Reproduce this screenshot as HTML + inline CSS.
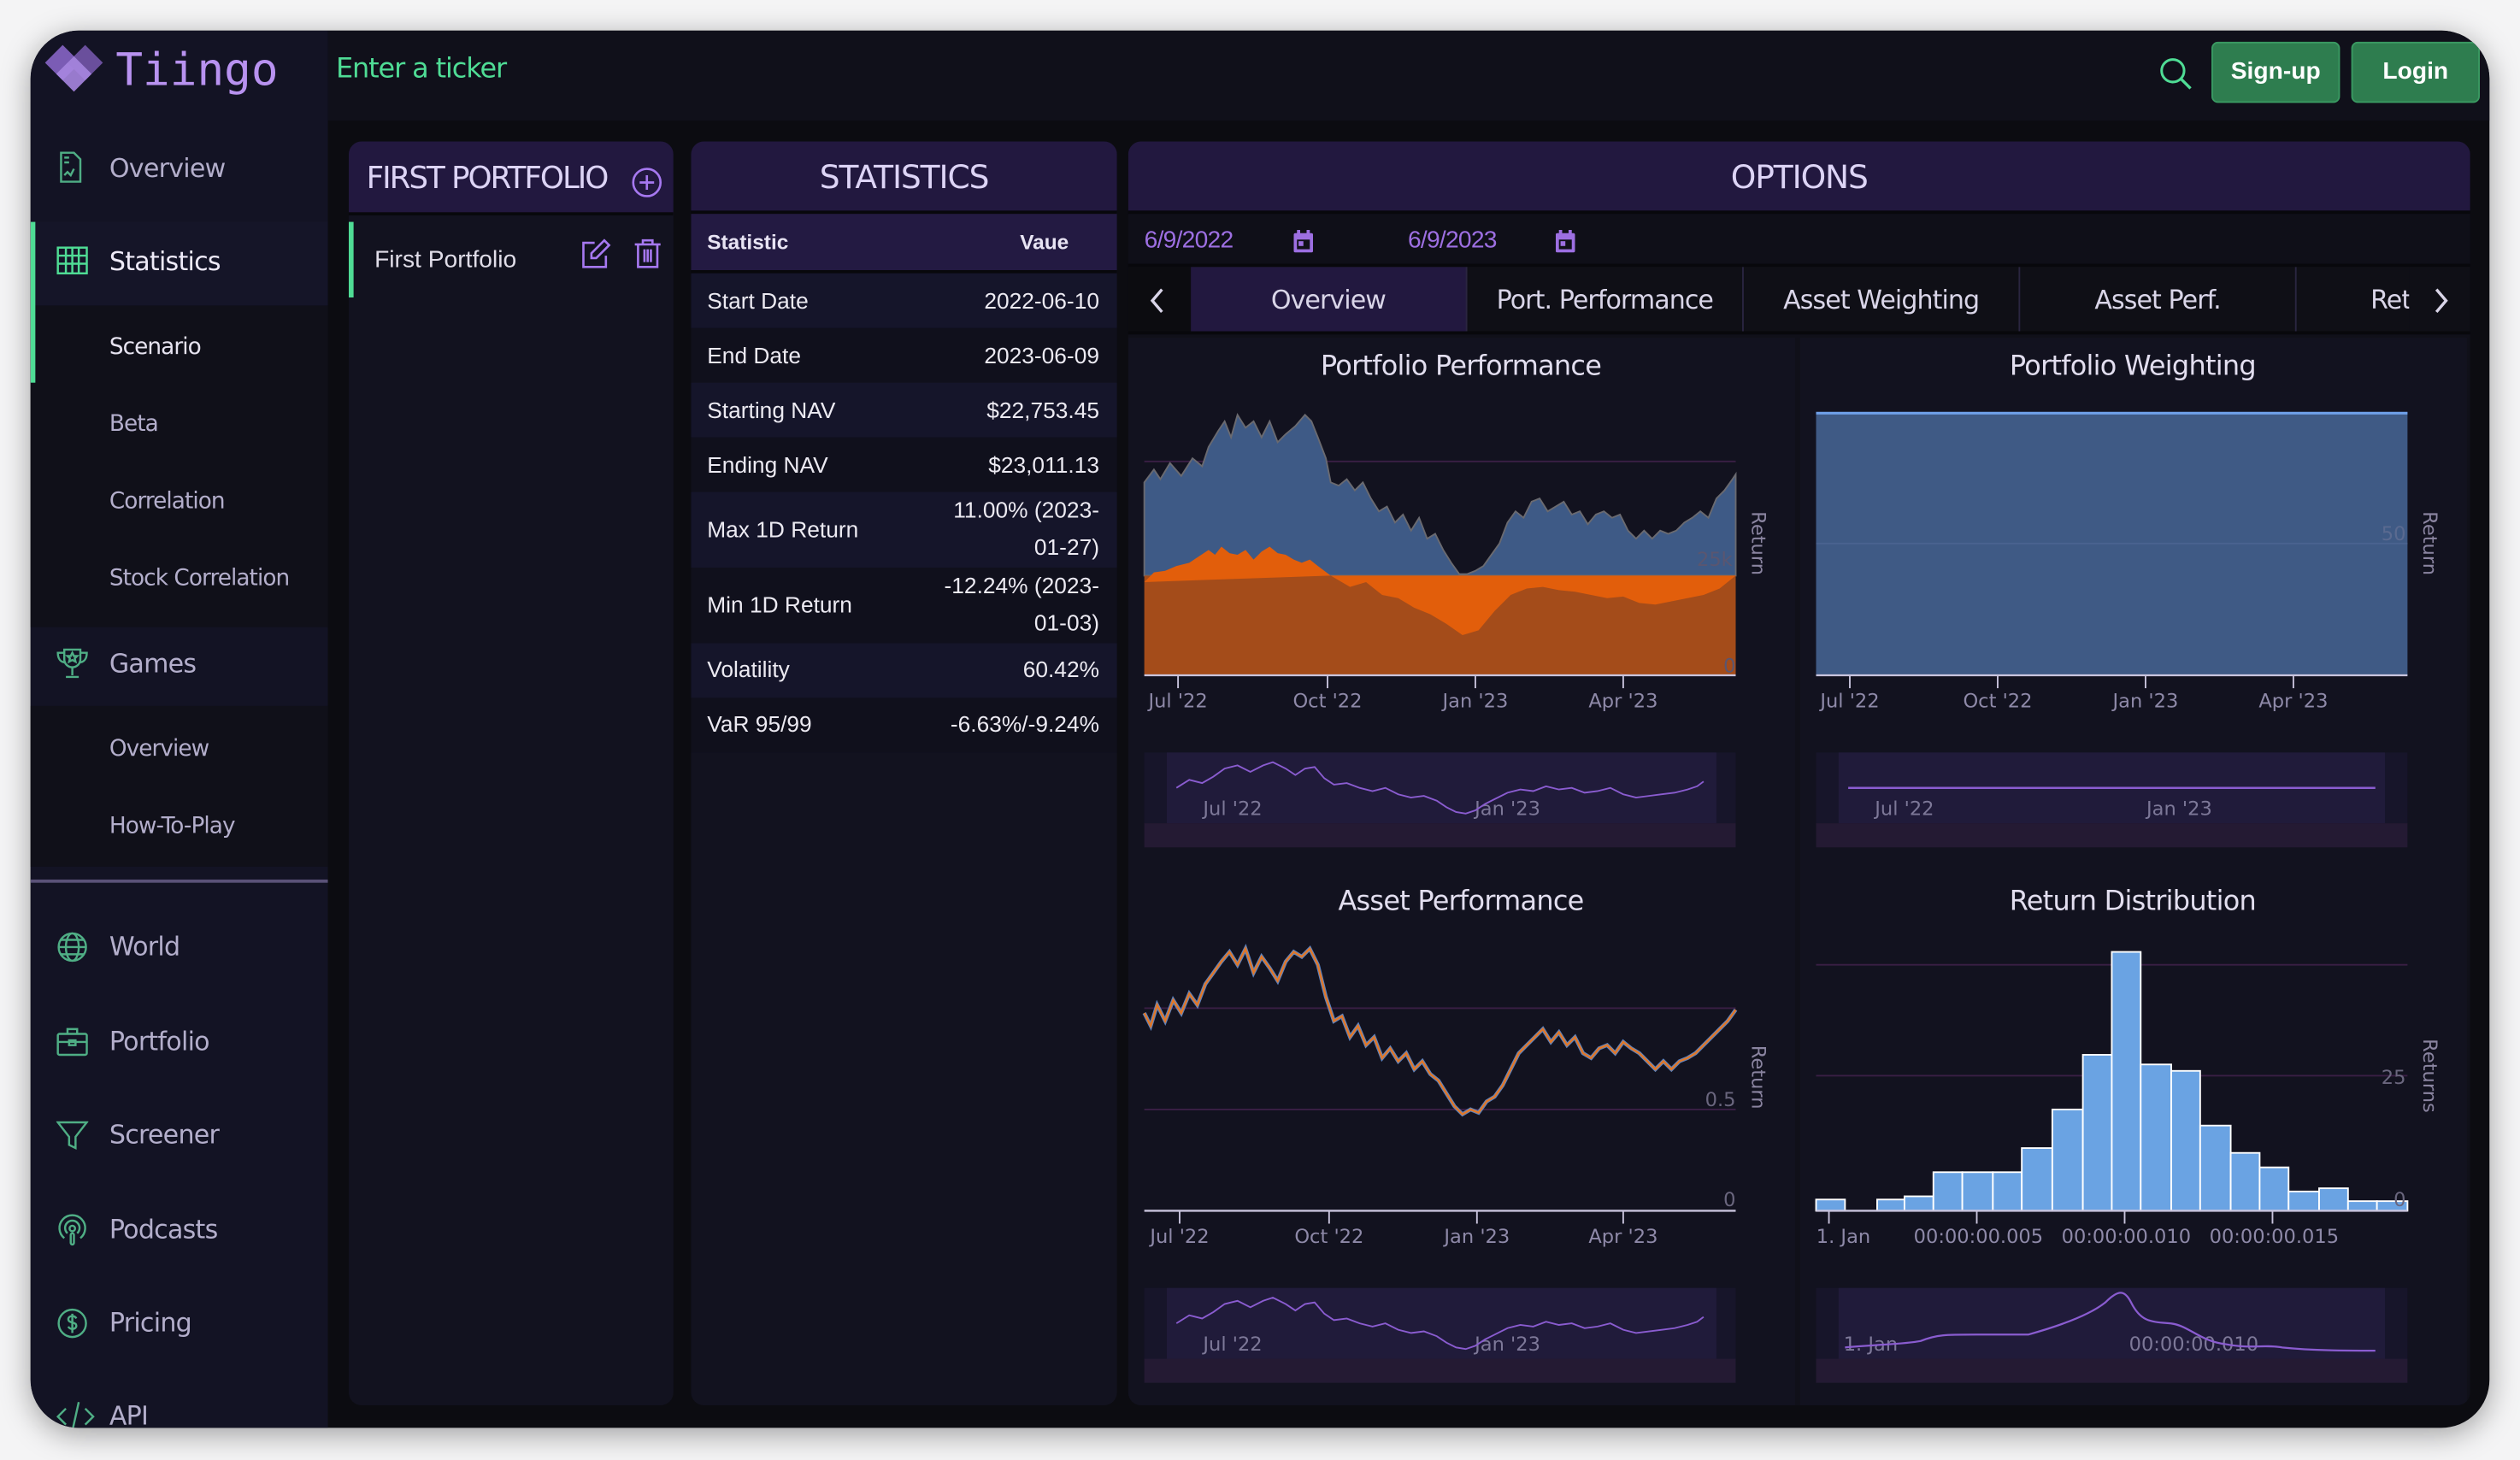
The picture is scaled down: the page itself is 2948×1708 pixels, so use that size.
<!DOCTYPE html>
<html><head><meta charset="utf-8">
<style>
*{margin:0;padding:0;box-sizing:border-box}
html,body{width:2948px;height:1708px;overflow:hidden;background:#f4f4f5}
.s{position:absolute;left:0;top:0;width:1568px;height:908px;transform:scale(1.88010,1.88106);transform-origin:0 0;font-family:"Liberation Sans",sans-serif}
.frame{position:absolute;left:19px;top:19px;width:1530px;height:869px;border-radius:30px;overflow:hidden;background:#0c0c11;box-shadow:0 4px 18px rgba(0,0,0,.35)}
.a{position:absolute}
.side{left:0;top:0;width:185px;height:869px;background:#131324}
.nav{position:absolute;left:49px;color:#b3aecb;font-size:16px;font-family:"DejaVu Sans","Liberation Sans",sans-serif;letter-spacing:-.4px}
.sub{position:absolute;left:49px;color:#b3aecb;font-size:14px;font-family:"DejaVu Sans","Liberation Sans",sans-serif;letter-spacing:-.5px}
.ic{position:absolute;left:16px}
.panel{position:absolute;background:#12121f;border-radius:8px;overflow:hidden}
.ph{position:absolute;left:0;top:0;width:100%;background:#22183f;color:#ddd4f6;font-size:20px;font-family:"DejaVu Sans","Liberation Sans",sans-serif}
.row{position:absolute;left:0;width:265px;font-size:14px;color:#eceaf2}
.row .l{position:absolute;left:10px}
.row .r{position:absolute;right:11px;text-align:right;line-height:23px}
.tab{position:absolute;top:0;height:42px;line-height:42px;text-align:center;color:#d9d5e8;font-size:16px;font-family:"DejaVu Sans","Liberation Sans",sans-serif;border-right:1px solid #2a2540;letter-spacing:-.5px}
</style></head><body>
<div class="s">
<div class="frame">
  <div class="a side"></div>
  <div class="a" style="left:185px;top:0;width:1345px;height:56px;background:#10101a"></div>
  <svg class="a" style="left:9px;top:7px" width="40" height="34" viewBox="0 0 40 34">
    <polygon points="11,2 22,13 11,24 0,13" fill="#7b5cb5"/>
    <polygon points="25,2 36,13 25,24 14,13" fill="#6a4f9c"/>
    <polygon points="18,9 29,20 18,31 7,20" fill="#a786e0" opacity=".9"/>
  </svg>
  <div class="a" style="left:53px;top:8px;font-family:'DejaVu Sans Mono','Liberation Mono',monospace;font-size:28px;color:#b892f0">Tiingo</div>
  <div class="a" style="left:190px;top:14px;font-size:17px;color:#4fdc95;font-family:'DejaVu Sans','Liberation Sans',sans-serif;letter-spacing:-.6px">Enter a ticker</div>
  <svg class="a" style="left:1324px;top:16px" width="22" height="22" viewBox="0 0 22 22"><circle cx="9" cy="9" r="7" fill="none" stroke="#4fdc95" stroke-width="1.6"/><line x1="14" y1="14" x2="20" y2="20" stroke="#4fdc95" stroke-width="1.8"/></svg>
  <div class="a" style="left:1357px;top:7px;width:80px;height:38px;background:#2e7d4f;border-radius:4px;border:1px solid #3a9a62;color:#fff;font-weight:bold;font-size:15px;text-align:center;line-height:36px">Sign-up</div>
  <div class="a" style="left:1444px;top:7px;width:80px;height:38px;background:#2e7d4f;border-radius:4px;border:1px solid #3a9a62;color:#fff;font-weight:bold;font-size:15px;text-align:center;line-height:36px">Login</div>

  <div class="a" style="left:0;top:119px;width:185px;height:52px;background:#151528"></div>
  <div class="a" style="left:0;top:171px;width:185px;height:200px;background:#101019"></div>
  <div class="a" style="left:0;top:420px;width:185px;height:100px;background:#101019"></div>
  <div class="a" style="left:0;top:119px;width:3px;height:100px;background:#4fdc95"></div>
  <div class="a" style="left:0;top:528px;width:185px;height:2px;background:#5a5278"></div>

  <svg class="ic" style="top:75px" width="18" height="20" viewBox="0 0 18 20" fill="none" stroke="#4fae85" stroke-width="1.3"><path d="M3 1h8l4 4v14H3z"/><path d="M5 4h3M5 7h3M5 15l2-2 2 2 2-4"/></svg>
  <div class="nav" style="top:76px">Overview</div>
  <svg class="ic" style="top:134px" width="20" height="18" viewBox="0 0 20 18" fill="none" stroke="#4fdc95" stroke-width="1.3"><rect x="1" y="1" width="18" height="16"/><path d="M1 6h18M1 11h18M6 1v16M10 1v16M14 1v16"/></svg>
  <div class="nav" style="top:134px;color:#eeeaf8">Statistics</div>
  <div class="sub" style="top:189px;color:#e6e3f0">Scenario</div>
  <div class="sub" style="top:237px">Beta</div>
  <div class="sub" style="top:285px">Correlation</div>
  <div class="sub" style="top:333px">Stock Correlation</div>
  <svg class="ic" style="top:383px" width="20" height="20" viewBox="0 0 20 20" fill="none" stroke="#4fae85" stroke-width="1.3"><path d="M5 2h10v6a5 5 0 0 1-10 0z"/><path d="M5 4H1c0 4 2 6 5 6M15 4h4c0 4-2 6-5 6M10 13v5M6 19h8"/><path d="M10 4l1 2 2 0-1.5 1.5.5 2-2-1-2 1 .5-2L7 6h2z"/></svg>
  <div class="nav" style="top:384px">Games</div>
  <div class="sub" style="top:439px">Overview</div>
  <div class="sub" style="top:487px">How-To-Play</div>

  <svg class="ic" style="top:560px" width="20" height="20" viewBox="0 0 20 20" fill="none" stroke="#4fae85" stroke-width="1.3"><circle cx="10" cy="10" r="8.5"/><ellipse cx="10" cy="10" rx="4" ry="8.5"/><path d="M1.5 10h17M3 5.5h14M3 14.5h14"/></svg>
  <div class="nav" style="top:560px">World</div>
  <svg class="ic" style="top:619px" width="20" height="20" viewBox="0 0 20 20" fill="none" stroke="#4fae85" stroke-width="1.3"><rect x="1" y="5" width="18" height="13" rx="1"/><path d="M7 5V2h6v3M1 10h18"/><rect x="8" y="9" width="4" height="3"/></svg>
  <div class="nav" style="top:619px">Portfolio</div>
  <svg class="ic" style="top:677px" width="20" height="20" viewBox="0 0 20 20" fill="none" stroke="#4fae85" stroke-width="1.3"><path d="M1 2h18l-7 9v7l-4-2v-5z"/></svg>
  <div class="nav" style="top:677px">Screener</div>
  <svg class="ic" style="top:736px" width="20" height="20" viewBox="0 0 20 20" fill="none" stroke="#4fae85" stroke-width="1.3"><path d="M5 15a8 8 0 1 1 10 0"/><path d="M7 12a4.5 4.5 0 1 1 6 0"/><circle cx="10" cy="9" r="1.7"/><rect x="9" y="12" width="2" height="7" rx="1"/></svg>
  <div class="nav" style="top:736px">Podcasts</div>
  <svg class="ic" style="top:794px" width="20" height="20" viewBox="0 0 20 20" fill="none" stroke="#4fae85" stroke-width="1.3"><circle cx="10" cy="10" r="8.5"/><path d="M12.5 7c-.5-1-1.5-1.5-2.5-1.5-1.5 0-2.5.8-2.5 2s1 1.7 2.5 2 2.5.8 2.5 2-1 2-2.5 2c-1 0-2-.5-2.5-1.5M10 4v12"/></svg>
  <div class="nav" style="top:794px">Pricing</div>
  <svg class="ic" style="top:852px" width="24" height="20" viewBox="0 0 24 20" fill="none" stroke="#4fae85" stroke-width="1.3"><path d="M6 5l-5 5 5 5M18 5l5 5-5 5M14 1L10 19"/></svg>
  <div class="nav" style="top:852px">API</div>

  <div class="panel" style="left:198px;top:69px;width:202px;height:786px">
    <div class="ph" style="height:46px;border-bottom:2px solid #08080c"><span style="position:absolute;left:11px;top:12px;letter-spacing:-1.1px;font-size:19px">FIRST PORTFOLIO</span>
      <svg style="position:absolute;left:176px;top:16px" width="19" height="19" viewBox="0 0 19 19" fill="none" stroke="#a678f0" stroke-width="1.4"><circle cx="9.5" cy="9.5" r="8.5"/><path d="M9.5 5v9M5 9.5h9"/></svg></div>
    <div class="a" style="left:0;top:50px;width:3px;height:47px;background:#4fdc95"></div>
    <div class="a" style="left:16px;top:65px;font-size:15px;color:#e0dde8">First Portfolio</div>
    <svg class="a" style="left:144px;top:60px" width="20" height="20" viewBox="0 0 20 20" fill="none" stroke="#a678f0" stroke-width="1.4"><path d="M9 3H2v15h14v-7"/><path d="M15 1.5l3 3-8 8H7v-3z"/></svg>
    <svg class="a" style="left:177px;top:60px" width="18" height="20" viewBox="0 0 18 20" fill="none" stroke="#a678f0" stroke-width="1.4"><path d="M1 4h16M6 4V1.5h6V4M3 4v14h12V4M7 7v8M9 7v8M11 7v8"/></svg>
  </div>

  <div class="panel" style="left:411px;top:69px;width:265px;height:786px">
    <div class="ph" style="height:43px;text-align:center;line-height:45px;letter-spacing:-.6px">STATISTICS</div>
    <div class="a" style="left:0;top:43px;width:265px;height:39px;background:#231a42;border-top:2px solid #08080c;border-bottom:2px solid #08080c;font-size:13px;font-weight:bold;color:#e8e4f4">
      <span class="a" style="left:10px;top:10px">Statistic</span><span class="a" style="right:30px;top:10px">Vaue</span></div>
    <div class="row" style="top:82px;height:34px;background:#15152a"><span class="l" style="top:9px">Start Date</span><span class="r" style="top:6px">2022-06-10</span></div>
    <div class="row" style="top:116px;height:34px;background:#10101c"><span class="l" style="top:9px">End Date</span><span class="r" style="top:6px">2023-06-09</span></div>
    <div class="row" style="top:150px;height:34px;background:#15152a"><span class="l" style="top:9px">Starting NAV</span><span class="r" style="top:6px">$22,753.45</span></div>
    <div class="row" style="top:184px;height:34px;background:#10101c"><span class="l" style="top:9px">Ending NAV</span><span class="r" style="top:6px">$23,011.13</span></div>
    <div class="row" style="top:218px;height:47px;background:#15152a"><span class="l" style="top:15px">Max 1D Return</span><span class="r" style="top:0px">11.00% (2023-<br>01-27)</span></div>
    <div class="row" style="top:265px;height:47px;background:#10101c"><span class="l" style="top:15px">Min 1D Return</span><span class="r" style="top:0px">-12.24% (2023-<br>01-03)</span></div>
    <div class="row" style="top:312px;height:34px;background:#15152a"><span class="l" style="top:8px">Volatility</span><span class="r" style="top:5px">60.42%</span></div>
    <div class="row" style="top:346px;height:34px;background:#10101c"><span class="l" style="top:8px">VaR 95/99</span><span class="r" style="top:5px">-6.63%/-9.24%</span></div>
  </div>

  <div class="panel" style="left:683px;top:69px;width:835px;height:786px;background:#101019">
    <div class="ph" style="height:43px;text-align:center;line-height:45px;letter-spacing:-.6px">OPTIONS</div>
    <div class="a" style="left:0;top:43px;width:835px;height:35px;border-top:2px solid #08080c;border-bottom:2px solid #08080c;background:#0f0f18;font-size:15px;color:#9d6fe2">
      <span class="a" style="left:10px;top:8px;letter-spacing:-.4px">6/9/2022</span>
      <svg class="a" style="left:103px;top:10px" width="12" height="14" viewBox="0 0 12 14"><rect x="0" y="2" width="12" height="12" rx="1" fill="#9d6fe2"/><rect x="2" y="0" width="2" height="3" fill="#9d6fe2"/><rect x="8" y="0" width="2" height="3" fill="#9d6fe2"/><rect x="2" y="6" width="8" height="6" fill="#101019"/><rect x="3" y="7" width="3" height="3" fill="#9d6fe2"/></svg>
      <span class="a" style="left:174px;top:8px;letter-spacing:-.4px">6/9/2023</span>
      <svg class="a" style="left:266px;top:10px" width="12" height="14" viewBox="0 0 12 14"><rect x="0" y="2" width="12" height="12" rx="1" fill="#9d6fe2"/><rect x="2" y="0" width="2" height="3" fill="#9d6fe2"/><rect x="8" y="0" width="2" height="3" fill="#9d6fe2"/><rect x="2" y="6" width="8" height="6" fill="#101019"/><rect x="3" y="7" width="3" height="3" fill="#9d6fe2"/></svg>
    </div>
    <div class="a" style="left:0;top:78px;width:835px;height:42px;background:#0f0f16;border-bottom:2px solid #08080c;overflow:hidden">
      <div class="a" style="left:0;top:0;width:39px;height:42px;background:#0c0c10"></div>
      <svg class="a" style="left:13px;top:13px" width="10" height="16" viewBox="0 0 10 16" fill="none" stroke="#d9d5e8" stroke-width="1.8"><path d="M8 1L2 8l6 7"/></svg>
      <div class="tab" style="left:39px;width:172px;background:#22183f">Overview</div>
      <div class="tab" style="left:211px;width:172px">Port. Performance</div>
      <div class="tab" style="left:383px;width:172px">Asset Weighting</div>
      <div class="tab" style="left:555px;width:172px">Asset Perf.</div>
      <div class="tab" style="left:727px;width:172px;text-align:left;padding-left:46px">Ret</div>
      <div class="a" style="left:797px;top:0;width:38px;height:42px;background:#0f0f16"></div>
      <svg class="a" style="left:812px;top:13px" width="10" height="16" viewBox="0 0 10 16" fill="none" stroke="#d9d5e8" stroke-width="1.8"><path d="M2 1l6 7-6 7"/></svg>
    </div>
    <div class="a" style="left:0;top:122px;width:415px;height:664px;background:#12121f"></div>
    <div class="a" style="left:418px;top:122px;width:415px;height:664px;background:#12121f"></div>
  </div>
</div>

<svg class="a" style="left:0;top:0" width="1568" height="908" viewBox="0 0 1568 908" font-family="'DejaVu Sans','Liberation Sans',sans-serif">
  <g fill="#e2deef" font-size="17" text-anchor="middle" letter-spacing="-0.4">
    <text x="909" y="233">Portfolio Performance</text>
    <text x="1327" y="233">Portfolio Weighting</text>
    <text x="909" y="566">Asset Performance</text>
    <text x="1327" y="566">Return Distribution</text>
  </g>
  <line x1="712" y1="287" x2="1080" y2="287" stroke="#3a1f45"/>
  <polygon fill="#3e5a86" stroke="#6a6a70" stroke-width="1" points="712,300 718,292 722,298 728,288 735,296 742,285 748,290 752,278 758,268 762,262 766,272 770,258 775,266 780,262 785,272 790,262 795,275 800,270 806,265 812,258 816,262 820,272 825,285 828,300 833,302 838,298 843,305 848,300 853,310 858,318 863,315 868,325 873,320 878,330 883,322 888,335 893,332 898,342 903,350 908,357 913,357 918,355 923,352 928,345 933,338 938,325 943,318 948,322 953,312 958,310 963,318 968,315 973,312 978,320 983,318 988,326 993,320 998,318 1003,322 1008,320 1013,330 1018,335 1023,330 1028,335 1033,330 1038,332 1043,330 1048,325 1053,322 1058,318 1063,322 1068,310 1073,305 1078,298 1080,295 1080,358 712,358"/>
  <rect x="712" y="358" width="368" height="62" fill="#a44c1a"/>
  <polygon fill="#e25e0b" points="712,362 718,356 725,355 732,352 740,350 746,346 752,342 756,345 760,340 765,344 770,345 775,342 780,348 785,343 790,340 795,344 800,345 805,348 810,350 815,348 820,352 828,358"/>
  <polygon fill="#e25e0b" points="828,358 840,365 850,362 860,370 870,372 880,378 890,382 900,388 910,395 920,392 930,380 940,370 950,366 960,365 970,367 980,368 990,370 1000,372 1010,371 1020,375 1030,376 1040,374 1050,372 1060,370 1070,366 1080,358"/>
  <line x1="712" y1="420" x2="1080" y2="420" stroke="#c9c4dd" stroke-width="1.2"/>
  <g stroke="#c9c4dd"><line x1="733" y1="420" x2="733" y2="428"/><line x1="826" y1="420" x2="826" y2="428"/><line x1="918" y1="420" x2="918" y2="428"/><line x1="1010" y1="420" x2="1010" y2="428"/></g>
  <g fill="#8e89a8" font-size="12" text-anchor="middle"><text x="733" y="440">Jul '22</text><text x="826" y="440">Oct '22</text><text x="918" y="440">Jan '23</text><text x="1010" y="440">Apr '23</text></g>
  <text x="1078" y="352" fill="#5a5670" font-size="12" text-anchor="end">25k</text>
  <text x="1080" y="418" fill="#5a5670" font-size="12" text-anchor="end">0</text>
  <text transform="translate(1090,318) rotate(90)" fill="#8a84a0" font-size="12">Return</text>
  <rect x="1130" y="256" width="368" height="164" fill="#3f5a85"/>
  <line x1="1130" y1="257" x2="1498" y2="257" stroke="#6fa0e8" stroke-width="1.5"/>
  <line x1="1130" y1="338" x2="1498" y2="338" stroke="#4a6390"/>
  <line x1="1130" y1="420" x2="1498" y2="420" stroke="#c9c4dd" stroke-width="1.2"/>
  <g stroke="#c9c4dd"><line x1="1151" y1="420" x2="1151" y2="428"/><line x1="1243" y1="420" x2="1243" y2="428"/><line x1="1335" y1="420" x2="1335" y2="428"/><line x1="1427" y1="420" x2="1427" y2="428"/></g>
  <g fill="#8e89a8" font-size="12" text-anchor="middle"><text x="1151" y="440">Jul '22</text><text x="1243" y="440">Oct '22</text><text x="1335" y="440">Jan '23</text><text x="1427" y="440">Apr '23</text></g>
  <text x="1497" y="336" fill="#5a6a90" font-size="12" text-anchor="end">50</text>
  <text transform="translate(1508,318) rotate(90)" fill="#8a84a0" font-size="12">Return</text>
  <g>
    <rect x="712" y="468" width="368" height="44" fill="#17152a"/><rect x="726" y="468" width="342" height="44" fill="#201b3a"/>
    <rect x="712" y="512" width="368" height="15" fill="#241a33"/>
    <text x="767" y="507" fill="#7d7898" font-size="12" text-anchor="middle">Jul '22</text><text x="938" y="507" fill="#7d7898" font-size="12" text-anchor="middle">Jan '23</text>
    <polyline fill="none" stroke="#8a5cd0" stroke-width="1" points="732,490 740,485 748,487 755,483 762,478 770,476 778,480 786,476 792,474 800,478 806,482 812,478 818,477 824,484 830,488 838,487 846,490 854,492 862,490 870,494 878,496 886,495 894,498 900,502 906,505 912,506 918,504 924,500 930,497 938,493 946,491 954,492 962,489 970,491 978,490 986,493 994,492 1002,490 1010,494 1018,496 1026,495 1034,494 1042,493 1050,491 1056,489 1060,486"/>
  </g>
  <g>
    <rect x="1130" y="468" width="368" height="44" fill="#17152a"/><rect x="1144" y="468" width="340" height="44" fill="#201b3a"/>
    <rect x="1130" y="512" width="368" height="15" fill="#241a33"/>
    <text x="1185" y="507" fill="#7d7898" font-size="12" text-anchor="middle">Jul '22</text><text x="1356" y="507" fill="#7d7898" font-size="12" text-anchor="middle">Jan '23</text>
    <line x1="1150" y1="490" x2="1478" y2="490" stroke="#8a5cd0" stroke-width="1.3"/>
  </g>
  <line x1="712" y1="627" x2="1080" y2="627" stroke="#3a1f45"/>
  <line x1="712" y1="690" x2="1080" y2="690" stroke="#3a1f45"/>
  <polyline fill="none" stroke="#5a82c0" stroke-width="2.4" points="712,630 716,638 720,625 725,635 730,622 735,630 740,618 745,625 750,612 755,605 760,598 765,592 770,600 775,590 780,605 785,595 790,602 795,610 800,598 805,592 810,595 815,590 820,600 825,620 830,635 835,632 840,645 845,638 850,650 855,645 860,658 865,652 870,660 875,655 880,665 885,660 890,668 895,672 900,680 905,688 910,693 915,690 920,692 925,685 930,682 935,675 940,665 945,655 950,650 955,645 960,640 965,648 970,642 975,650 980,645 985,655 990,658 995,652 1000,650 1005,655 1010,648 1015,652 1020,655 1025,660 1030,665 1035,660 1040,665 1045,660 1050,658 1055,655 1060,650 1065,645 1070,640 1075,635 1080,628"/>
  <polyline fill="none" stroke="#e0782a" stroke-width="1.3" points="712,630 716,638 720,625 725,635 730,622 735,630 740,618 745,625 750,612 755,605 760,598 765,592 770,600 775,590 780,605 785,595 790,602 795,610 800,598 805,592 810,595 815,590 820,600 825,620 830,635 835,632 840,645 845,638 850,650 855,645 860,658 865,652 870,660 875,655 880,665 885,660 890,668 895,672 900,680 905,688 910,693 915,690 920,692 925,685 930,682 935,675 940,665 945,655 950,650 955,645 960,640 965,648 970,642 975,650 980,645 985,655 990,658 995,652 1000,650 1005,655 1010,648 1015,652 1020,655 1025,660 1030,665 1035,660 1040,665 1045,660 1050,658 1055,655 1060,650 1065,645 1070,640 1075,635 1080,628"/>
  <line x1="712" y1="753" x2="1080" y2="753" stroke="#c9c4dd" stroke-width="1.2"/>
  <g stroke="#c9c4dd"><line x1="734" y1="753" x2="734" y2="761"/><line x1="827" y1="753" x2="827" y2="761"/><line x1="919" y1="753" x2="919" y2="761"/><line x1="1010" y1="753" x2="1010" y2="761"/></g>
  <g fill="#8e89a8" font-size="12" text-anchor="middle"><text x="734" y="773">Jul '22</text><text x="827" y="773">Oct '22</text><text x="919" y="773">Jan '23</text><text x="1010" y="773">Apr '23</text></g>
  <text x="1080" y="688" fill="#6a667e" font-size="12" text-anchor="end">0.5</text>
  <text x="1080" y="750" fill="#6a667e" font-size="12" text-anchor="end">0</text>
  <text transform="translate(1090,650) rotate(90)" fill="#8a84a0" font-size="12">Return</text>
  <g>
    <rect x="712" y="801" width="368" height="44" fill="#17152a"/><rect x="726" y="801" width="342" height="44" fill="#201b3a"/>
    <rect x="712" y="845" width="368" height="15" fill="#241a33"/>
    <text x="767" y="840" fill="#7d7898" font-size="12" text-anchor="middle">Jul '22</text><text x="938" y="840" fill="#7d7898" font-size="12" text-anchor="middle">Jan '23</text>
    <polyline fill="none" stroke="#8a5cd0" stroke-width="1" points="732,823 740,818 748,820 755,816 762,811 770,809 778,813 786,809 792,807 800,811 806,815 812,811 818,810 824,817 830,821 838,820 846,823 854,825 862,823 870,827 878,829 886,828 894,831 900,835 906,838 912,839 918,837 924,833 930,830 938,826 946,824 954,825 962,822 970,824 978,823 986,826 994,825 1002,823 1010,827 1018,829 1026,828 1034,827 1042,826 1050,824 1056,822 1060,819"/>
  </g>
  <line x1="1130" y1="600" x2="1498" y2="600" stroke="#3a1f45"/>
  <line x1="1130" y1="669" x2="1498" y2="669" stroke="#3a1f45"/>
  <g fill="#6aa3e3" stroke="#ffffff" stroke-width="1">
    <rect x="1130" y="746" width="18" height="7"/><rect x="1168" y="746" width="17" height="7"/><rect x="1185" y="744" width="18" height="9"/>
    <rect x="1203" y="729" width="18" height="24"/><rect x="1221" y="729" width="19" height="24"/><rect x="1240" y="729" width="18" height="24"/>
    <rect x="1258" y="714" width="19" height="39"/><rect x="1277" y="690" width="19" height="63"/><rect x="1296" y="656" width="18" height="97"/>
    <rect x="1314" y="592" width="18" height="161"/><rect x="1332" y="662" width="19" height="91"/><rect x="1351" y="666" width="18" height="87"/>
    <rect x="1369" y="700" width="19" height="53"/><rect x="1388" y="717" width="18" height="36"/><rect x="1406" y="726" width="18" height="27"/>
    <rect x="1424" y="741" width="19" height="12"/><rect x="1443" y="739" width="18" height="14"/><rect x="1461" y="747" width="18" height="6"/><rect x="1479" y="747" width="19" height="6"/>
  </g>
  <line x1="1130" y1="753" x2="1498" y2="753" stroke="#c9c4dd" stroke-width="1.2"/>
  <g stroke="#c9c4dd"><line x1="1138" y1="753" x2="1138" y2="761"/><line x1="1230" y1="753" x2="1230" y2="761"/><line x1="1322" y1="753" x2="1322" y2="761"/><line x1="1414" y1="753" x2="1414" y2="761"/></g>
  <g fill="#8e89a8" font-size="12" text-anchor="middle"><text x="1147" y="773">1. Jan</text><text x="1231" y="773">00:00:00.005</text><text x="1323" y="773">00:00:00.010</text><text x="1415" y="773">00:00:00.015</text></g>
  <text x="1497" y="674" fill="#6a667e" font-size="12" text-anchor="end">25</text>
  <text x="1497" y="750" fill="#6a667e" font-size="12" text-anchor="end">0</text>
  <text transform="translate(1508,646) rotate(90)" fill="#8a84a0" font-size="12">Returns</text>
  <g>
    <rect x="1130" y="801" width="368" height="44" fill="#17152a"/><rect x="1144" y="801" width="340" height="44" fill="#201b3a"/>
    <rect x="1130" y="845" width="368" height="15" fill="#241a33"/>
    <text x="1164" y="840" fill="#7d7898" font-size="12" text-anchor="middle">1. Jan</text><text x="1365" y="840" fill="#7d7898" font-size="12" text-anchor="middle">00:00:00.010</text>
    <path fill="none" stroke="#8a5cd0" stroke-width="1.2" d="M1148,838 C1170,836 1185,836 1195,834 C1205,830 1210,830 1230,830 L1262,830 C1280,825 1300,818 1310,810 C1318,802 1322,802 1326,810 C1332,822 1338,822 1350,823 C1362,824 1368,834 1385,836 C1400,839 1410,836 1420,838 C1440,840 1460,840 1478,840"/>
  </g>
</svg>
</div>
</body></html>
